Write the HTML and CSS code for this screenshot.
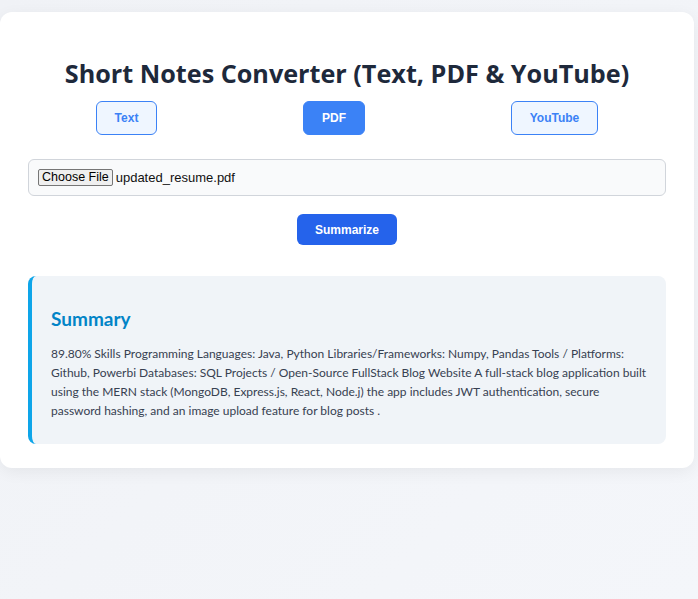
FILE: index.html
```html
<!DOCTYPE html>
<html>
<head>
<meta charset="utf-8">
<link rel="stylesheet" href="styles.css">
</head>
<body>
<div class="card">
  <h1 class="title">Short Notes Converter (Text, PDF &amp; YouTube)</h1>
  <div class="tabs">
    <button class="tab tab-text">Text</button>
    <button class="tab tab-pdf active">PDF</button>
    <button class="tab tab-yt">YouTube</button>
  </div>
  <div class="file-box">
    <span class="file-btn">Choose File</span>
    <span class="file-name">updated_resume.pdf</span>
  </div>
  <div class="actions">
    <button class="submit">Summarize</button>
  </div>
  <div class="summary">
    <h2 class="summary-title">Summary</h2>
    <p class="summary-text">89.80% Skills Programming Languages: Java, Python Libraries/Frameworks: Numpy, Pandas Tools / Platforms: Github, Powerbi Databases: SQL Projects / Open-Source FullStack Blog Website A full-stack blog application built using the MERN stack (MongoDB, Express.js, React, Node.j) the app includes JWT authentication, secure password hashing, and an image upload feature for blog posts .</p>
  </div>
</div>
</body>
</html>
```
FILE: styles.css
```css
html, body {
  margin: 0;
  padding: 0;
}
body {
  background: linear-gradient(135deg, #f0f2f6 0%, #f4f6fa 100%);
  min-height: 599px;
  font-family: Lato, "Open Sans", sans-serif;
  padding-top: 12px;
  box-sizing: border-box;
}
.card {
  width: 694px;
  box-sizing: border-box;
  background: #ffffff;
  border-radius: 12px;
  box-shadow: 0 4px 16px rgba(0, 0, 0, 0.06);
  padding: 40px 28px 24px;
}
.title {
  margin: 0;
  text-align: center;
  font-family: "Open Sans", sans-serif;
  font-size: 25.2px;
  font-weight: 700;
  color: #1e293b;
  line-height: 42px;
}
.tabs {
  display: flex;
  justify-content: space-around;
  margin: 7px -5px 0;
}
.tab {
  font-family: "Liberation Sans", Arial, sans-serif;
  font-size: 12px;
  font-weight: 700;
  color: #3b82f6;
  background: #eff6ff;
  border: 1px solid #3b82f6;
  border-radius: 6px;
  height: 34px;
  padding: 0;
}
.tab-text { width: 61px; }
.tab-pdf { width: 62px; }
.tab-yt { width: 87px; }
.tab.active {
  background: #3b82f6;
  color: #ffffff;
}
.file-box {
  margin-top: 24px;
  height: 37px;
  box-sizing: border-box;
  background: #f9fafb;
  border: 1px solid #d1d5db;
  border-radius: 6px;
  display: flex;
  align-items: center;
  padding: 0 9px;
  font-family: "Liberation Sans", Arial, sans-serif;
  font-size: 13px;
  color: #111;
}
.file-btn {
  display: inline-block;
  background: #efefef;
  border: 1px solid #767676;
  border-radius: 2px;
  padding: 0 3px;
  height: 17px;
  line-height: 15px;
  box-sizing: border-box;
  margin-right: 3px;
  color: #000;
  font-size: 12.5px;
}
.actions {
  display: flex;
  justify-content: center;
  margin-top: 18px;
}
.submit {
  font-family: "Liberation Sans", Arial, sans-serif;
  font-size: 12px;
  font-weight: 700;
  color: #ffffff;
  background: #2563eb;
  border: none;
  border-radius: 6px;
  width: 100px;
  height: 31px;
}
.summary {
  margin-top: 31px;
  background: #f0f4f8;
  border-left: 4px solid #0ea5e9;
  border-radius: 8px;
  padding: 28px 14px 24px 19px;
}
.summary-title {
  margin: 0;
  font-size: 19px;
  font-weight: 700;
  color: #0284c7;
  line-height: 30px;
}
.summary-text {
  margin: 10px 0 0;
  font-size: 12px;
  line-height: 19px;
  color: #374151;
}
```
